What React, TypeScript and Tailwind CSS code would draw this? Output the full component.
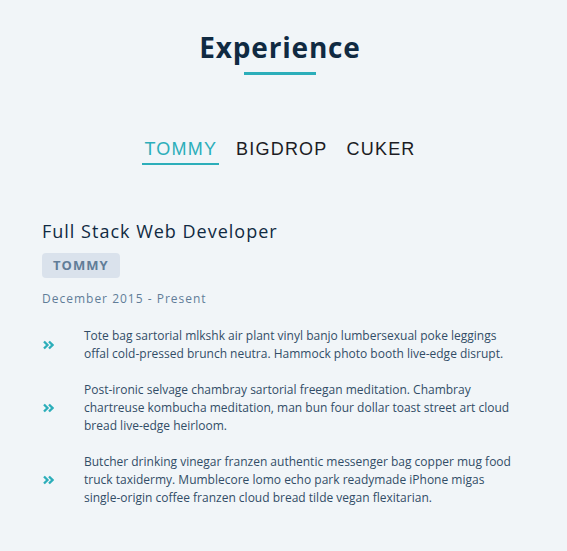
import { useState } from "react";

const jobs = [
  {
    company: "TOMMY",
    title: "Full Stack Web Developer",
    dates: "December 2015 - Present",
    duties: [
      "Tote bag sartorial mlkshk air plant vinyl banjo lumbersexual poke leggings offal cold-pressed brunch neutra. Hammock photo booth live-edge disrupt.",
      "Post-ironic selvage chambray sartorial freegan meditation. Chambray chartreuse kombucha meditation, man bun four dollar toast street art cloud bread live-edge heirloom.",
      "Butcher drinking vinegar franzen authentic messenger bag copper mug food truck taxidermy. Mumblecore lomo echo park readymade iPhone migas single-origin coffee franzen cloud bread tilde vegan flexitarian.",
    ],
  },
  { company: "BIGDROP", title: "", dates: "", duties: [] },
  { company: "CUKER", title: "", dates: "", duties: [] },
];

const Chevrons = () => (
  <svg width="11" height="10" viewBox="0 0 11 10" className="text-[#2caeba]">
    <path d="M1 1.5 L4.5 5 L1 8.5" fill="none" stroke="currentColor" strokeWidth="2.3" />
    <path d="M6 1.5 L9.5 5 L6 8.5" fill="none" stroke="currentColor" strokeWidth="2.3" />
  </svg>
);

const App = () => {
  const [active, setActive] = useState(0);
  const job = jobs[active];

  return (
    <div className="min-h-[551px] bg-[#f1f5f8] pt-[30px] pr-[7px] font-['Open_Sans','Noto_Sans',sans-serif]">
      <div className="flex flex-col items-center">
        <h2 className="text-[28px] font-bold leading-[34px] tracking-[0.8px] text-[#102a42]">
          Experience
        </h2>
        <div className="mt-[8px] h-[3px] w-[72px] bg-[#2caeba]" />
      </div>

      <div className="mt-[62px] flex justify-center gap-x-[15px] font-['Liberation_Sans',Arial,sans-serif]">
        {jobs.map((j, i) => (
          <button
            key={j.company}
            onClick={() => setActive(i)}
            className={
              i === active
                ? "border-b-2 border-[#2caeba] px-[2px] pb-[2px] text-[18px] leading-[24px] tracking-[1.2px] text-[#2caeba]"
                : "border-b-2 border-transparent px-[2px] pb-[2px] text-[18px] leading-[24px] tracking-[1.2px] text-[#1c1c24]"
            }
          >
            {j.company}
          </button>
        ))}
      </div>

      <div className="mt-[54px] pl-[42px] pr-[43px]">
        <h3 className="text-[18px] font-normal leading-[24px] tracking-[1px] text-[#102a42]">
          {job.title}
        </h3>
        <div className="mt-[10px] inline-block rounded-[4px] bg-[#dae2ec] px-[11px] py-[4px] text-[13px] font-bold leading-[17px] tracking-[1px] text-[#617d98]">
          {job.company}
        </div>
        <p className="mt-[13px] text-[12px] leading-[16px] tracking-[1px] text-[#617d98]">
          {job.dates}
        </p>
        <div className="mt-[20px] flex flex-col gap-y-[18px]">
          {job.duties.map((d) => (
            <div key={d} className="grid grid-cols-[42px_1fr] items-center">
              <div className="pl-[1px]">
                <Chevrons />
              </div>
              <p className="text-[12px] leading-[18px] text-[#324d67]">{d}</p>
            </div>
          ))}
        </div>
      </div>
    </div>
  );
};

export default App;
